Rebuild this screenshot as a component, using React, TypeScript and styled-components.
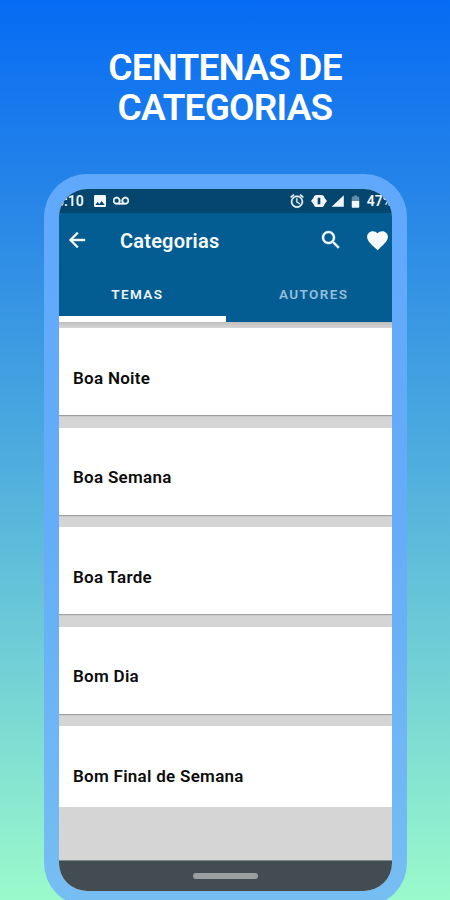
import React from 'react';
import styled, { createGlobalStyle } from 'styled-components';

const GlobalStyle = createGlobalStyle`
  * {
    box-sizing: border-box;
  }
  body {
    margin: 0;
    font-family: Roboto, 'Liberation Sans', sans-serif;
  }
`;

const StyledPage = styled.main`
  display: flex;
  flex-direction: column;
  align-items: center;
  width: 450px;
  height: 900px;
  overflow: hidden;
  background: linear-gradient(180deg, #066bf4 0%, #2584e8 21%, #4aa8df 48%, #75d3d5 76%, #9bfacb 100%);
`;

const StyledHeading = styled.h1`
  flex: none;
  height: 174px;
  margin: 0;
  padding-top: 48px;
  font-weight: 600;
  font-size: 37px;
  line-height: 40px;
  letter-spacing: -0.8px;
  text-align: center;
  color: #ffffff;
`;

const StyledPhone = styled.section`
  flex: none;
  width: 363px;
  height: 732px;
  margin-left: 1px;
  padding: 15px;
  border-radius: 43px;
  background: linear-gradient(180deg, #60a8fc 0%, #65adf8 50%, #76bef2 100%);
`;

const StyledScreen = styled.div`
  display: flex;
  flex-direction: column;
  height: 702px;
  overflow: hidden;
  border-radius: 28px;
  background: #d5d5d5;
`;

const StyledStatusBar = styled.div`
  display: flex;
  flex: none;
  align-items: center;
  justify-content: space-between;
  height: 24px;
  background: #04466e;
  color: #f2f7fb;
  font-weight: 600;
  font-size: 14px;
  line-height: 24px;
`;

const StyledStatusGroup = styled.div<{ $end?: boolean }>`
  display: flex;
  align-items: center;
  height: 24px;
  margin-left: ${({ $end }) => ($end ? '0' : '-3px')};
  margin-right: ${({ $end }) => ($end ? '-1px' : '0')};
`;

const StyledIcon = styled.svg<{ $size: number; $left?: number; $right?: number }>`
  display: block;
  flex: none;
  width: ${({ $size }) => $size}px;
  height: ${({ $size }) => $size}px;
  margin-left: ${({ $left = 0 }) => $left}px;
  margin-right: ${({ $right = 0 }) => $right}px;
  fill: currentColor;
`;

const StyledToolbar = styled.header`
  display: flex;
  flex: none;
  align-items: center;
  height: 54px;
  background: #045d92;
  color: #f6fafd;
  h2 {
    flex: 1;
    margin: 0 0 0 31px;
    font-weight: 600;
    font-size: 20px;
    line-height: 54px;
    letter-spacing: 0.2px;
    padding-top: 2px;
  }
`;

const StyledTabs = styled.nav`
  display: grid;
  flex: none;
  grid-template-columns: 1fr 1fr;
  height: 55px;
  background: #045d92;
`;

const StyledTab = styled.div<{ $active?: boolean }>`
  padding: 18px 0 0 ${({ $active }) => ($active ? '0' : '10px')};
  text-indent: ${({ $active }) => ($active ? '-10px' : '0')};
  border-bottom: 6px solid ${({ $active }) => ($active ? '#ffffff' : 'transparent')};
  color: ${({ $active }) => ($active ? '#ecf5fb' : '#95bfda')};
  font-weight: 600;
  font-size: 13.5px;
  line-height: 18px;
  letter-spacing: 1.4px;
  text-align: center;
`;

const StyledList = styled.div`
  display: flex;
  flex: 1;
  flex-direction: column;
  gap: 12.6px;
  padding-top: 6px;
  background: linear-gradient(180deg, #bfbfbf 0, #d5d5d5 6px);
`;

const StyledCard = styled.div<{ $cut?: boolean }>`
  flex: none;
  height: ${({ $cut }) => ($cut ? '81px' : '87px')};
  padding: 39.5px 14px 0;
  background: #ffffff;
  box-shadow: ${({ $cut }) => ($cut ? 'none' : '0 1px 1px rgba(0, 0, 0, 0.25)')};
  color: #0c0c0c;
  font-weight: 600;
  font-size: 17px;
  line-height: 20px;
  letter-spacing: 0.28px;
`;

const StyledNavBar = styled.footer`
  display: flex;
  flex: none;
  align-items: center;
  justify-content: center;
  height: 31px;
  border-top: 1px solid #7b8a88;
  background: #434c51;
  span {
    width: 65px;
    height: 6px;
    border-radius: 3px;
    background: #9a9fa1;
  }
`;

const categories = ['Boa Noite', 'Boa Semana', 'Boa Tarde', 'Bom Dia', 'Bom Final de Semana'];

const StatusBar = () => (
    <StyledStatusBar>
        <StyledStatusGroup>
            <span>5:10</span>
            <StyledIcon viewBox="0 0 24 24" $size={16} $left={8}>
                <path d="M21 19V5c0-1.1-.9-2-2-2H5c-1.1 0-2 .9-2 2v14c0 1.1.9 2 2 2h14c1.1 0 2-.9 2-2zM8.500 13.500l2.500 3.010L14.500 12l4.500 6H5l3.500-4.500z"/>
            </StyledIcon>
            <StyledIcon viewBox="0 0 24 24" $size={16} $left={5}>
                <path stroke="currentColor" d="M18.500 6C15.460 6 13 8.460 13 11.500c0 1.330.470 2.550 1.260 3.500H9.740c.790-.950 1.260-2.170 1.260-3.500C11 8.460 8.540 6 5.500 6S0 8.460 0 11.500 2.460 17 5.500 17h13c3.040 0 5.500-2.460 5.500-5.500S21.540 6 18.500 6zm-13 9C3.570 15 2 13.430 2 11.500S3.570 8 5.500 8 9 9.570 9 11.500 7.430 15 5.500 15zm13 0c-1.930 0-3.500-1.570-3.500-3.500S16.570 8 18.500 8 22 9.570 22 11.500 20.430 15 18.500 15z"/>
            </StyledIcon>
        </StyledStatusGroup>
        <StyledStatusGroup $end>
            <StyledIcon viewBox="0 0 24 24" $size={16} $right={6}>
                <path stroke="currentColor" strokeWidth=".6" d="M22 5.720l-4.600-3.860-1.290 1.530 4.600 3.860L22 5.720zM7.880 3.390L6.600 1.860 2 5.710l1.290 1.530 4.590-3.850zM12.500 8H11v6l4.750 2.850.750-1.230-4-2.370V8zM12 4c-4.970 0-9 4.030-9 9s4.020 9 9 9c4.970 0 9-4.030 9-9s-4.030-9-9-9zm0 16c-3.870 0-7-3.130-7-7s3.130-7 7-7 7 3.130 7 7-3.130 7-7 7z"/>
            </StyledIcon>
            <StyledIcon viewBox="0 0 24 24" $size={16} $right={4}>
                <path d="M0 12l4.500-5.500v11zM24 12l-4.500-5.500v11z"/>
                <path fillRule="evenodd" d="M9 3h6a5 5 0 0 1 5 5v8a5 5 0 0 1-5 5H9a5 5 0 0 1-5-5V8a5 5 0 0 1 5-5zm1 4v10h4V7z"/>
            </StyledIcon>
            <StyledIcon viewBox="0 0 24 24" $size={14} $right={3}>
                <path d="M1 22h21V2z"/>
            </StyledIcon>
            <StyledIcon viewBox="0 0 24 24" $size={15} $right={4}>
                <path fillOpacity=".4" d="M18 5.330C18 4.600 17.400 4 16.670 4H14V2h-4v2H7.330C6.600 4 6 4.600 6 5.330V11h12V5.330z"/>
                <path d="M6 11v9.670C6 21.400 6.600 22 7.330 22h9.330c.740 0 1.340-.600 1.340-1.330V11H6z"/>
            </StyledIcon>
            <span>47%</span>
        </StyledStatusGroup>
    </StyledStatusBar>
);

const App = () => {
    return (
        <StyledPage>
            <GlobalStyle/>
            <StyledHeading>CENTENAS DE<br/>CATEGORIAS</StyledHeading>
            <StyledPhone>
                <StyledScreen>
                    <StatusBar/>
                    <StyledToolbar>
                        <StyledIcon viewBox="0 0 24 24" $size={24} $left={6}>
                            <path stroke="currentColor" strokeWidth=".4" d="M20 11H7.830l5.590-5.590L12 4l-8 8 8 8 1.410-1.410L7.830 13H20v-2z"/>
                        </StyledIcon>
                        <h2>Categorias</h2>
                        <StyledIcon viewBox="0 0 24 24" $size={24} $right={22}>
                            <path stroke="currentColor" strokeWidth=".4" d="M15.500 14h-.790l-.280-.270C15.410 12.590 16 11.110 16 9.500 16 5.910 13.090 3 9.500 3S3 5.910 3 9.500 5.910 16 9.500 16c1.610 0 3.090-.590 4.230-1.570l.270.280v.790l5 4.990L20.490 19l-4.990-5zm-6 0C7.010 14 5 11.990 5 9.500S7.010 5 9.500 5 14 7.010 14 9.500 11.990 14 9.500 14z"/>
                        </StyledIcon>
                        <StyledIcon viewBox="0 0 24 24" $size={25} $right={2}>
                            <path d="M12 21.350l-1.450-1.320C5.400 15.360 2 12.280 2 8.500 2 5.420 4.420 3 7.500 3c1.740 0 3.410.810 4.500 2.090C13.090 3.810 14.760 3 16.500 3 19.580 3 22 5.420 22 8.500c0 3.780-3.400 6.860-8.550 11.540L12 21.350z"/>
                        </StyledIcon>
                    </StyledToolbar>
                    <StyledTabs>
                        <StyledTab $active>TEMAS</StyledTab>
                        <StyledTab>AUTORES</StyledTab>
                    </StyledTabs>
                    <StyledList>
                        {categories.map((name, i) => (
                            <StyledCard key={name} $cut={i === categories.length - 1}>{name}</StyledCard>
                        ))}
                    </StyledList>
                    <StyledNavBar><span/></StyledNavBar>
                </StyledScreen>
            </StyledPhone>
        </StyledPage>
    );
}

export default App;
